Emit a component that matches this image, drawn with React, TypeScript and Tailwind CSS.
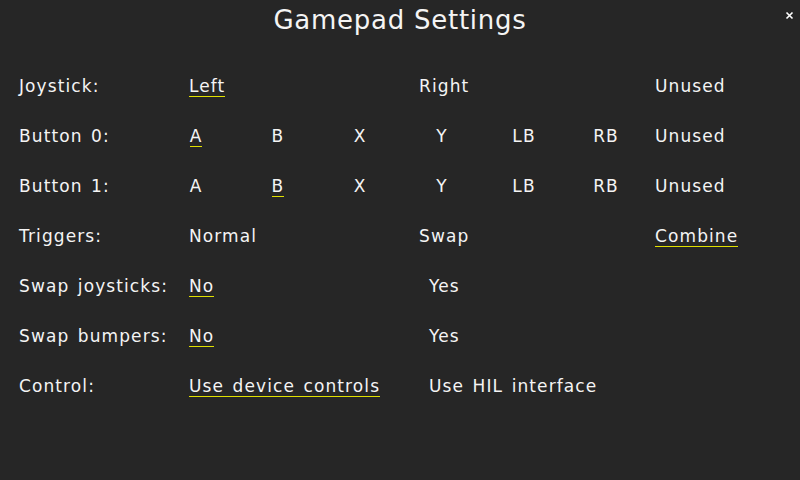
import React from "react";

const font = { fontFamily: '"DejaVu Sans", sans-serif' };

function Opt({ text, sel }: { text: string; sel?: boolean }) {
  return (
    <span
      className={
        "block w-max leading-[20px] whitespace-pre " +
        (sel ? "border-b border-[#e0e000]" : "border-b border-transparent")
      }
    >
      {text}
    </span>
  );
}

function Row({ label, children }: { label: string; children: React.ReactNode }) {
  return (
    <div className="flex h-[50px] items-start">
      <div className="w-[170px] shrink-0 leading-[20px] whitespace-pre">{label}</div>
      <div className="flex items-start">{children}</div>
    </div>
  );
}

function ButtonRow({ label, sel }: { label: string; sel: number }) {
  const items = ["A", "B", "X", "Y", "LB", "RB"];
  return (
    <Row label={label}>
      <div className="flex items-start -ml-[34px]">
        {items.map((t, i) => (
          <div key={t} className="w-[82px] shrink-0 flex justify-center">
            <Opt text={t} sel={i === sel} />
          </div>
        ))}
        <div className="ml-[8px] shrink-0">
          <Opt text="Unused" />
        </div>
      </div>
    </Row>
  );
}

export default function App() {
  return (
    <div
      className="relative w-[800px] h-[480px] bg-[#262626] text-[#f4f4f4] overflow-hidden text-[17px] tracking-[1.1px] [word-spacing:2px]"
      style={font}
    >
      <div className="pt-[4px] h-[36px] text-center text-[26px] leading-[32px] tracking-[0.75px] [word-spacing:0px]">
        Gamepad Settings
      </div>
      <svg
        className="absolute left-[785px] top-[11px]"
        width="9"
        height="9"
        viewBox="0 0 9 9"
      >
        <path d="M1.5 1.5 L7.5 7.5 M7.5 1.5 L1.5 7.5" stroke="#ffffff" strokeWidth="1.6" />
      </svg>
      <div className="pt-[40px] pl-[19px]">
        <Row label="Joystick:">
          <div className="w-[230px] shrink-0">
            <Opt text="Left" sel />
          </div>
          <div className="w-[236px] shrink-0">
            <Opt text="Right" />
          </div>
          <Opt text="Unused" />
        </Row>
        <ButtonRow label="Button 0:" sel={0} />
        <ButtonRow label="Button 1:" sel={1} />
        <Row label="Triggers:">
          <div className="w-[230px] shrink-0">
            <Opt text="Normal" />
          </div>
          <div className="w-[236px] shrink-0">
            <Opt text="Swap" />
          </div>
          <Opt text="Combine" sel />
        </Row>
        <Row label="Swap joysticks:">
          <div className="w-[240px] shrink-0">
            <Opt text="No" sel />
          </div>
          <Opt text="Yes" />
        </Row>
        <Row label="Swap bumpers:">
          <div className="w-[240px] shrink-0">
            <Opt text="No" sel />
          </div>
          <Opt text="Yes" />
        </Row>
        <Row label="Control:">
          <div className="w-[240px] shrink-0">
            <Opt text="Use device controls" sel />
          </div>
          <Opt text="Use HIL interface" />
        </Row>
      </div>
    </div>
  );
}
